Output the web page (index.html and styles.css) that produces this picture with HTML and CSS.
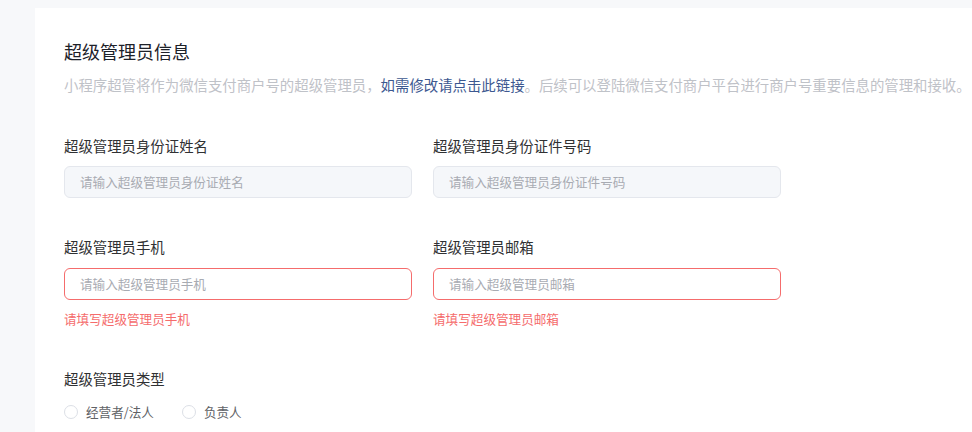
FILE: index.html
```html
<!DOCTYPE html>
<html lang="zh-CN">
<head>
<meta charset="utf-8">
<link rel="stylesheet" href="styles.css">
</head>
<body>
<div class="card">
  <h2 class="title">超级管理员信息</h2>
  <p class="desc">小程序超管将作为微信支付商户号的超级管理员，<a class="link">如需修改请点击此链接</a>。后续可以登陆微信支付商户平台进行商户号重要信息的管理和接收。</p>

  <div class="row">
    <div class="field">
      <div class="label">超级管理员身份证姓名</div>
      <div class="input disabled">请输入超级管理员身份证姓名</div>
    </div>
    <div class="field">
      <div class="label">超级管理员身份证件号码</div>
      <div class="input disabled">请输入超级管理员身份证件号码</div>
    </div>
  </div>

  <div class="row row2">
    <div class="field">
      <div class="label">超级管理员手机</div>
      <div class="input error">请输入超级管理员手机</div>
      <div class="err">请填写超级管理员手机</div>
    </div>
    <div class="field">
      <div class="label">超级管理员邮箱</div>
      <div class="input error">请输入超级管理员邮箱</div>
      <div class="err">请填写超级管理员邮箱</div>
    </div>
  </div>

  <div class="type">
    <div class="label">超级管理员类型</div>
    <div class="radios">
      <label class="radio"><span class="circle"></span>经营者/法人</label>
      <label class="radio"><span class="circle"></span>负责人</label>
    </div>
  </div>
</div>
</body>
</html>
```

FILE: styles.css
```css
* { box-sizing: border-box; }
body {
  margin: 0;
  height: 100vh;
  display: flex;
  flex-direction: column;
  background: #f7f8fa;
  padding: 8px 0 0 35px;
  font-family: "Noto Sans CJK SC", "Noto Sans", sans-serif;
  overflow: hidden;
}
.card {
  flex: 1;
  min-height: 0;
  overflow: hidden;
  background: #fff;
  padding: 31px 0 0 29px;
}
.title {
  margin: 0;
  font-size: 18px;
  line-height: 24px;
  font-weight: 400;
  color: #1d2129;
}
.desc {
  margin: 12px 0 0;
  font-size: 14.4px;
  line-height: 20px;
  color: #bfc2c8;
  white-space: nowrap;
}
.link { color: #3d5890; }
.row {
  display: grid;
  grid-template-columns: 348px 348px;
  column-gap: 21px;
  margin-top: 41px;
}
.row2 { margin-top: 39px; }
.label {
  font-size: 14.4px;
  line-height: 20px;
  color: #303133;
}
.input {
  margin-top: 10px;
  height: 32px;
  border: 1px solid #dcdfe6;
  border-radius: 6px;
  padding: 0 15px;
  font-size: 12.6px;
  line-height: 30px;
  color: #a8abb2;
  background: #fff;
}
.row2 .input { margin-top: 11px; }
.input.disabled { background: #f5f7fa; border-color: #e4e7ed; }
.input.error { border-color: #f56c6c; }
.err {
  margin-top: 10px;
  font-size: 12.6px;
  line-height: 18px;
  color: #f56c6c;
}
.type { margin-top: 41px; }
.radios {
  display: flex;
  gap: 28px;
  margin-top: 13px;
}
.radio {
  display: flex;
  align-items: center;
  font-size: 12.6px;
  line-height: 20px;
  color: #606266;
}
.circle {
  width: 14px;
  height: 14px;
  border: 1px solid #dcdfe6;
  border-radius: 50%;
  margin-right: 8px;
  background: #fff;
}
```
